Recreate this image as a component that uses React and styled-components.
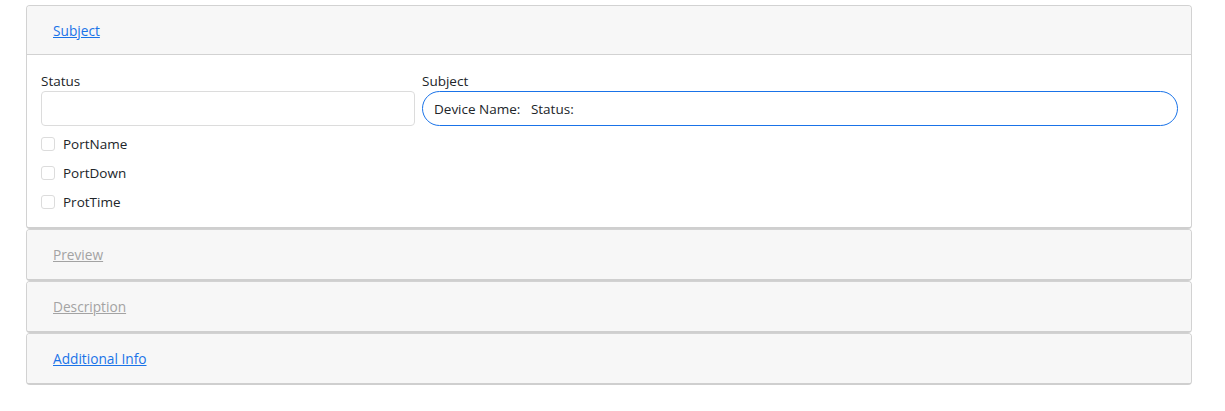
import React from "react";
import styled, { createGlobalStyle } from "styled-components";

const Global = createGlobalStyle`
  html, body { margin: 0; padding: 0; background: #fff; }
  body { font-family: "Open Sans", "Noto Sans", sans-serif; font-size: 13.5px; color: #212529; }
  * { box-sizing: border-box; }
`;

const Page = styled.div`
  padding: 5px 33px 0 26px;
  display: flex;
  flex-direction: column;
`;

const Card = styled.section`
  border: 1px solid #d2d2d2;
  border-bottom: 2px solid #cfcfcf;
  border-radius: 4px;
  background: #f7f7f7;
  overflow: hidden;
`;

const Header = styled.div`
  height: 49px;
  display: flex;
  align-items: center;
  padding-left: 26px;
  background: #f7f7f7;
  border-bottom: ${(p) => (p.$open ? "1px solid #d2d2d2" : "none")};
`;

const HeaderLink = styled.a`
  font-size: 13.7px;
  color: ${(p) => (p.$muted ? "#a3a3a3" : "#1a73e8")};
  text-decoration: underline;
  cursor: pointer;
`;

const Body = styled.div`
  background: #fff;
  padding: 17px 13px 11px 14px;
`;

const FieldRow = styled.div`
  display: grid;
  grid-template-columns: 374px 1fr;
  column-gap: 7px;
`;

const Field = styled.div`
  display: flex;
  flex-direction: column;
`;

const Label = styled.label`
  line-height: 18px;
  margin-bottom: 1px;
`;

const TextInput = styled.input`
  height: 35px;
  border: 1px solid ${(p) => (p.$active ? "#1a73e8" : "#dcdcdc")};
  border-radius: ${(p) => (p.$active ? "18px" : "4px")};
  padding: 0 11px;
  font-family: inherit;
  font-size: 13.5px;
  color: #212529;
  background: #fff;
  outline: none;
`;

const CheckList = styled.div`
  display: flex;
  flex-direction: column;
  margin-top: 3px;
`;

const CheckRow = styled.label`
  height: 29px;
  display: flex;
  align-items: center;
  gap: 8px;
`;

const Box = styled.span`
  width: 14px;
  height: 14px;
  border: 1px solid #dcdcdc;
  border-radius: 3px;
  background: #fff;
`;

export default function App() {
  return (
    <>
      <Global />
      <Page>
        <Card>
          <Header $open>
            <HeaderLink>Subject</HeaderLink>
          </Header>
          <Body>
            <FieldRow>
              <Field>
                <Label>Status</Label>
                <TextInput defaultValue="" />
              </Field>
              <Field>
                <Label>Subject</Label>
                <TextInput $active defaultValue={"Device Name:   Status:"} />
              </Field>
            </FieldRow>
            <CheckList>
              {["PortName", "PortDown", "ProtTime"].map((t) => (
                <CheckRow key={t}>
                  <Box />
                  {t}
                </CheckRow>
              ))}
            </CheckList>
          </Body>
        </Card>
        <Card>
          <Header>
            <HeaderLink $muted>Preview</HeaderLink>
          </Header>
        </Card>
        <Card>
          <Header>
            <HeaderLink $muted>Description</HeaderLink>
          </Header>
        </Card>
        <Card>
          <Header>
            <HeaderLink>Additional Info</HeaderLink>
          </Header>
        </Card>
      </Page>
    </>
  );
}
